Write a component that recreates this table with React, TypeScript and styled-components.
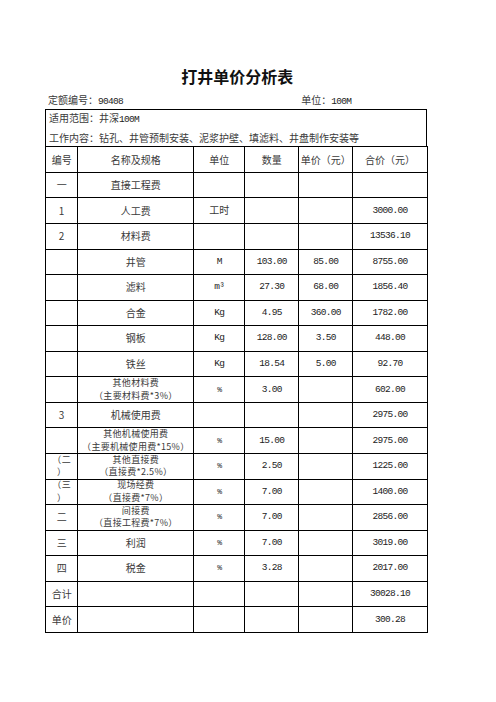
import React from "react";
import styled, { createGlobalStyle } from "styled-components";

const GlobalStyle = createGlobalStyle`
  html, body {
    margin: 0;
    padding: 0;
    background: #ffffff;
  }
  body {
    font-family: "Noto Sans CJK SC", "Liberation Sans", sans-serif;
    color: #222;
  }
`;

// a string is one line, an array is a cell with two lines
type Text = string | string[];

interface Row {
  no: Text;
  name: Text;
  unit?: string;
  qty?: string;
  price?: string;
  total?: string;
}

const rows: Row[] = [
  { no: "一", name: "直接工程费" },
  { no: "1", name: "人工费", unit: "工时", total: "3000.00" },
  { no: "2", name: "材料费", total: "13536.10" },
  { no: "", name: "井管", unit: "M", qty: "103.00", price: "85.00", total: "8755.00" },
  { no: "", name: "滤料", unit: "m³", qty: "27.30", price: "68.00", total: "1856.40" },
  { no: "", name: "合金", unit: "Kg", qty: "4.95", price: "360.00", total: "1782.00" },
  { no: "", name: "钢板", unit: "Kg", qty: "128.00", price: "3.50", total: "448.00" },
  { no: "", name: "铁丝", unit: "Kg", qty: "18.54", price: "5.00", total: "92.70" },
  { no: "", name: ["其他材料费", "（主要材料费*3%）"], unit: "%", qty: "3.00", total: "602.00" },
  { no: "3", name: "机械使用费", total: "2975.00" },
  {
    no: "",
    name: ["其他机械使用费", "（主要机械使用费*15%）"],
    unit: "%",
    qty: "15.00",
    total: "2975.00",
  },
  { no: ["（二", "）"], name: ["其他直接费", "（直接费*2.5%）"], unit: "%", qty: "2.50", total: "1225.00" },
  { no: ["（三", "）"], name: ["现场经费", "（直接费*7%）"], unit: "%", qty: "7.00", total: "1400.00" },
  { no: "二", name: ["间接费", "（直接工程费*7%）"], unit: "%", qty: "7.00", total: "2856.00" },
  { no: "三", name: "利润", unit: "%", qty: "7.00", total: "3019.00" },
  { no: "四", name: "税金", unit: "%", qty: "3.28", total: "2017.00" },
  { no: "合计", name: "", total: "30028.10" },
  { no: "单价", name: "", total: "300.28" },
];

const cols = [32.3, 116, 51, 54, 54, 74.4];

const renderText = (t: Text) =>
  Array.isArray(t) ? (
    <Lines>
      {t.map((l, i) => (
        <Line key={i}>{l}</Line>
      ))}
    </Lines>
  ) : (
    t
  );

const renderUnit = (u?: string) => {
  if (u === "%") return <Pct>%</Pct>;
  if (u === "工时") return <Plain>工时</Plain>;
  return u;
};

export default function App() {
  return (
    <>
      <GlobalStyle />
      <Sheet>
        <Title>打井单价分析表</Title>
        <MetaRow>
          <MetaText>
            定额编号：<Mono>90408</Mono>
          </MetaText>
          <MetaText>
            单位：<Mono>100M</Mono>
          </MetaText>
        </MetaRow>
        <InfoBox>
          <InfoLine>
            适用范围：井深<Mono>100M</Mono>
          </InfoLine>
          <InfoLine>工作内容：钻孔、井管预制安装、泥浆护壁、填滤料、井盘制作安装等</InfoLine>
        </InfoBox>
        <Grid>
          <colgroup>
            {cols.map((w, i) => (
              <col key={i} style={{ width: w }} />
            ))}
          </colgroup>
          <tbody>
            <tr>
              <Cell>编号</Cell>
              <Cell>名称及规格</Cell>
              <Cell>单位</Cell>
              <Cell>数量</Cell>
              <Cell>单价（元）</Cell>
              <Cell>合价（元）</Cell>
            </tr>
            {rows.map((r, i) => (
              <tr key={i}>
                <Cell>{renderText(r.no)}</Cell>
                <Cell>{renderText(r.name)}</Cell>
                <Cell $mono>{renderUnit(r.unit)}</Cell>
                <Cell $mono>{r.qty}</Cell>
                <Cell $mono>{r.price}</Cell>
                <Cell $mono>{r.total}</Cell>
              </tr>
            ))}
          </tbody>
        </Grid>
      </Sheet>
    </>
  );
}

const Sheet = styled.div`
  width: 381.7px;
  margin-left: 45px;
  padding-top: 66px;
`;

const Title = styled.div`
  font-size: 16px;
  line-height: 20px;
  font-weight: bold;
  color: #111;
  text-align: center;
  padding-left: 3px;
`;

const MetaRow = styled.div`
  display: grid;
  grid-template-columns: 253.3px 1fr;
  margin-top: 6px;
  height: 17px;
  align-items: center;
`;

const MetaText = styled.div`
  font-size: 10px;
  line-height: 14px;
  padding-left: 3px;
  color: #3a3a3a;
`;

const Mono = styled.span`
  font-family: "Liberation Mono", monospace;
  font-size: 9.5px;
  letter-spacing: -0.7px;
  color: #222;
`;

const Pct = styled.span`
  font-size: 8px;
`;

const Plain = styled.span`
  font-family: "Noto Sans CJK SC", sans-serif;
  font-size: 10px;
  letter-spacing: 0;
  color: #3a3a3a;
`;

const InfoBox = styled.div`
  border: 1px solid #000;
  border-bottom: none;
  height: 37.4px;
  display: flex;
  flex-direction: column;
  justify-content: center;
  padding: 0 3px;
  box-sizing: border-box;
`;

const InfoLine = styled.div`
  font-size: 10px;
  line-height: 18px;
  color: #3a3a3a;
  white-space: nowrap;
`;

const Grid = styled.table`
  width: 381.7px;
  border-collapse: collapse;
  table-layout: fixed;

  tr {
    height: 25.56px;
  }
`;

const Cell = styled.td<{ $mono?: boolean }>`
  border: 1px solid #000;
  padding: 0;
  height: 24.5px;
  box-sizing: border-box;
  text-align: center;
  vertical-align: middle;
  color: ${(p) => (p.$mono ? "#222" : "#3a3a3a")};
  line-height: 12px;
  white-space: nowrap;
  font-family: ${(p) =>
    p.$mono ? `"Liberation Mono", monospace` : `"Noto Sans CJK SC", sans-serif`};
  font-size: ${(p) => (p.$mono ? "9.5px" : "10px")};
  letter-spacing: ${(p) => (p.$mono ? "-0.7px" : "0")};
`;

const Lines = styled.div`
  height: 24px;
  display: flex;
  flex-direction: column;
  justify-content: center;
  align-items: center;
`;

const Line = styled.span`
  display: block;
  font-size: 9px;
  line-height: 12.7px;
  letter-spacing: 0.3px;
  flex-shrink: 0;
`;
